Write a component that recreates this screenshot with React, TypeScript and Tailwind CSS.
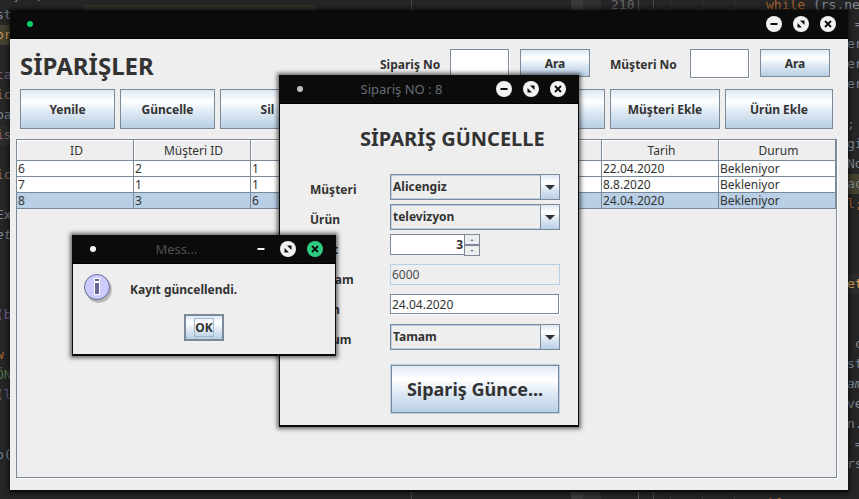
import React from "react";

const METAL =
  "bg-[linear-gradient(to_bottom,#dde8f3_0%,#ffffff_30%,#dde8f3_60%,#b8cfe5_100%)]";
const CODE =
  "absolute w-max font-['DejaVu_Sans_Mono',monospace] text-[13px] leading-5 text-[#7f8b98] whitespace-pre";

const leftCode: [string, string][] = [
  ["st", ""],
  ["or", "bg-[#45422f] text-[#c89b56]"],
  ["", ""],
  ["ta", "text-[#7d6589]"],
  ["ic", "text-[#8d706e]"],
  ["pa", ""],
  ["is", "bg-[#2d2d2d] text-[#8d706e]"],
  ["", ""],
  ["ic", "text-[#8d706e]"],
  ["", ""],
  ["Ex", ""],
  ["et", "italic"],
  ["", ""],
  ["", ""],
  ["", ""],
  ["(b", "text-[#6f608f]"],
  ["", ""],
  ["w", "text-[#b06a32]"],
  ["ÖN", "text-[#54734c]"],
  ["(l", "text-[#6f608f]"],
  ["", ""],
  ["", ""],
  ["p(", ""],
];

const rightCode: [string, string][] = [
  [" =", ""],
  ["er", ""],
  ["er", ""],
  ["er", ""],
  ["", ""],
  [";", ""],
  ["gi", ""],
  ["No", ""],
  ["ac", "bg-[#45422f]"],
  ["l;", "text-[#a0602f]"],
  ["", ""],
  ["", ""],
  ["", ""],
  ["et", "bg-[#2d2d2d] text-[#d9a55b]"],
  ["", ""],
  ["", ""],
  [" c", ""],
  ["st", ""],
  ["am", "italic"],
  ["ve", ""],
  ["n.", ""],
  [" =", ""],
  ["rs", ""],
];

function CodeColumn({ lines }: { lines: [string, string][] }) {
  return (
    <>
      {lines.map(([text, tone], i) => (
        <div key={i} className={`h-5 w-6 ${tone}`}>
          {text}
        </div>
      ))}
    </>
  );
}

function Editor() {
  return (
    <div aria-hidden="true" className="absolute inset-0 overflow-hidden bg-[#262626]">
      <div className="absolute top-[5px] left-[83px] h-5 w-[232px] bg-[#35342a]" />
      <div className="absolute inset-y-0 left-[411px] w-px bg-[#4a4a4a]" />
      <div className="absolute inset-y-0 left-[571px] w-3 bg-[#3a3b3c]" />
      <div className="absolute inset-y-0 left-[583px] w-[18px] bg-[#2f3133]" />
      <div className="absolute inset-y-0 left-[638px] w-px bg-[#5a5a5a]" />
      <div className="absolute inset-y-0 left-[653px] w-px bg-[#4a4a4a]" />
      <div className="absolute inset-y-0 left-[670px] border-l border-dotted border-[#3c3c3c]" />
      <div className="absolute inset-y-0 left-[702px] border-l border-dotted border-[#3c3c3c]" />
      <div className="absolute inset-y-0 left-[734px] border-l border-dotted border-[#3c3c3c]" />
      <div className={`${CODE} -top-[15px] left-3`}>ş );</div>
      <div className={`${CODE} -top-[5px] left-[611px]`}>
        <span className="text-[#666a6d]">210</span>
      </div>
      <div className={`${CODE} -top-[5px] left-[766px]`}>
        <span className="text-[#a8642f]">while</span> (rs.next
      </div>
      <div className={`${CODE} top-[494px] left-[766px]`}>
        <span className="text-[#a8642f]">if</span>
      </div>
      <div className={`${CODE} top-[5px] -left-1`}>
        <CodeColumn lines={leftCode} />
      </div>
      <div className={`${CODE} top-[14px] left-[847px]`}>
        <CodeColumn lines={rightCode} />
      </div>
    </div>
  );
}

function WindowButton({
  kind,
  look = "light",
}: {
  kind: "minimize" | "maximize" | "close";
  look?: "light" | "green" | "bare";
}) {
  const disc = look === "green" ? "#2ecc80" : "#f2f2f2";
  const ink = look === "bare" ? "#f2f2f2" : "#0b0b0b";
  return (
    <button type="button" aria-label={kind} className="size-4">
      <svg viewBox="0 0 16 16" className="size-4">
        {look !== "bare" && <circle cx="8" cy="8" r="8" fill={disc} />}
        {kind === "minimize" && <rect x="4.5" y="7" width="7" height="2" fill={ink} />}
        {kind === "maximize" && (
          <path d="M7 4.5h4.500v4.500zM4.500 7l4.500 4.500h-4.500z" fill={ink} />
        )}
        {kind === "close" && (
          <path d="M5 5l6 6M11 5l-6 6" stroke={ink} strokeWidth="1.800" />
        )}
      </svg>
    </button>
  );
}

function TitleBar({
  title,
  dot,
  message = false,
}: {
  title?: string;
  dot: string;
  message?: boolean;
}) {
  return (
    <header className="flex h-[29px] shrink-0 items-center border-b border-black bg-[#0b0b0b] pr-3 pl-[17px]">
      <span className={`size-[6px] rounded-full ${dot}`} />
      <span
        className={`flex-1 pl-1 text-center text-[13px] leading-5 ${message ? "text-[#505050]" : "text-[#676d77]"}`}
      >
        {title}
      </span>
      <div className="flex gap-[11px]">
        <WindowButton kind="minimize" look={message ? "bare" : "light"} />
        <WindowButton kind="maximize" />
        <WindowButton kind="close" look={message ? "green" : "light"} />
      </div>
    </header>
  );
}

function MetalButton({
  className,
  label,
  children,
}: {
  className: string;
  label?: string;
  children?: React.ReactNode;
}) {
  return (
    <button
      type="button"
      aria-label={label}
      className={`border border-[#7a8a99] pt-[2px] font-bold ${METAL} ${className}`}
    >
      {children}
    </button>
  );
}

const FIELD = "border border-[#7a8a99] bg-white shadow-[1px_1px_0_#ffffff]";

function SearchBox({ id, label, width }: { id: string; label: string; width: string }) {
  return (
    <div className="flex items-start">
      <label htmlFor={id} className={`leading-8 font-bold ${width}`}>
        {label}
      </label>
      <input id={id} className={`mr-[11px] h-[29px] w-[59px] px-[2px] ${FIELD}`} />
      <MetalButton className="h-7 w-[70px]">Ara</MetalButton>
    </div>
  );
}

const columns = ["ID", "Müşteri ID", "", "", "", "Tarih", "Durum"];
const orders = [
  ["6", "2", "1", "", "", "22.04.2020", "Bekleniyor"],
  ["7", "1", "1", "", "", "8.8.2020", "Bekleniyor"],
  ["8", "3", "6", "", "", "24.04.2020", "Bekleniyor"],
];

function OrdersTable() {
  return (
    <div className="mr-[11px] ml-[6px] flex-1 border border-[#7a8a99] shadow-[1px_1px_0_#ffffff]">
      <table className="w-full table-fixed border-separate border-spacing-0">
        <thead>
          <tr>
            {columns.map((name, i) => (
              <th
                key={i}
                className="h-[21px] border-r border-b border-[#7a8a99] p-0 pt-[2px] pl-[3px] text-[12px] leading-[18px] font-normal shadow-[inset_1px_1px_0_#ffffff]"
              >
                {name}
              </th>
            ))}
          </tr>
        </thead>
        <tbody>
          {orders.map((row) => (
            <tr key={row[0]} className={row[0] === "8" ? "bg-[#b8cfe5]" : "bg-white"}>
              {row.map((cell, i) => (
                <td
                  key={i}
                  className="h-4 border-r border-b border-[#7a8a99] p-0 pl-px leading-[15px]"
                >
                  {cell}
                </td>
              ))}
            </tr>
          ))}
        </tbody>
      </table>
    </div>
  );
}

function OrdersWindow() {
  return (
    <section className="relative flex flex-1 flex-col border-b-2 border-[#0b0b0b] bg-[#eeeeee] shadow-[0_0_6px_1px_rgba(0,0,0,0.7)]">
      <TitleBar dot="bg-[#00cc66]" />
      <div className="flex flex-1 flex-col gap-[10px] pt-[10px] pb-3">
        <div className="flex h-[30px] pr-[18px] pl-[10px]">
          <h1 className="mr-auto text-[24px] leading-[34px] font-bold">SİPARİŞLER</h1>
          <div className="flex gap-5">
            <SearchBox id="order-no" label="Sipariş No" width="w-[70px]" />
            <SearchBox id="customer-no" label="Müşteri No" width="w-20" />
          </div>
        </div>
        <div className="flex h-10 gap-[5px] pr-[15px] pl-[10px]">
          <MetalButton className="w-[95px]">Yenile</MetalButton>
          <MetalButton className="w-[95px]">Güncelle</MetalButton>
          <MetalButton className="w-[95px]">Sil</MetalButton>
          <MetalButton className="flex-1" label="Sipariş Ekle" />
          <MetalButton className="w-[110px]">Müşteri Ekle</MetalButton>
          <MetalButton className="w-[108px]">Ürün Ekle</MetalButton>
        </div>
        <OrdersTable />
      </div>
    </section>
  );
}

function FormRow({ id, label, children }: { id: string; label: string; children: React.ReactNode }) {
  return (
    <div className="flex h-[30px] items-start">
      <label htmlFor={id} className="w-20 leading-8 font-bold">
        {label}
      </label>
      {children}
    </div>
  );
}

function Combo({ id, value }: { id: string; value: string }) {
  return (
    <div className="relative flex h-[26px] flex-1 border border-[#7a8a99]">
      <select
        id={id}
        className="w-full appearance-none bg-[#eeeeee] pr-5 pl-[2px] font-bold shadow-[inset_0_0_0_1px_#b8cfe5] outline-none"
      >
        <option>{value}</option>
      </select>
      <span
        className={`pointer-events-none absolute inset-y-0 right-0 flex w-[19px] items-center justify-center border-l border-[#7a8a99] ${METAL}`}
      >
        <svg viewBox="0 0 10 5" className="mt-px h-[5px] w-[10px]">
          <path d="M0 0h10l-5 5z" fill="#333333" />
        </svg>
      </span>
    </div>
  );
}

function SpinButton({ up }: { up?: boolean }) {
  return (
    <button
      type="button"
      aria-label={up ? "Artır" : "Azalt"}
      className="flex h-[11px] w-4 items-center justify-center border border-[#7a8a99]"
    >
      <svg viewBox="0 0 4 2" className="h-[2px] w-1">
        <path d={up ? "M0 2h4l-2-2z" : "M0 0h4l-2 2z"} fill="#7a8a99" />
      </svg>
    </button>
  );
}

const SHADOW = "shadow-[0_0_4px_2px_rgba(0,0,0,0.55)]";

function UpdateDialog() {
  return (
    <section
      role="dialog"
      aria-label="Sipariş NO : 8"
      className={`absolute top-[75px] left-[279px] w-[300px] border-x border-b-2 border-[#0b0b0b] bg-[#eeeeee] ${SHADOW}`}
    >
      <TitleBar title="Sipariş NO : 8" dot="bg-[#c0c0c0]" />
      <div className="pr-[18px] pb-[11px] pl-[30px]">
        <h2 className="pt-5 pb-5 pl-[50px] text-[20px] leading-[30px] font-bold whitespace-nowrap">
          SİPARİŞ GÜNCELLE
        </h2>
        <FormRow id="customer" label="Müşteri">
          <Combo id="customer" value="Alicengiz" />
        </FormRow>
        <FormRow id="product" label="Ürün">
          <Combo id="product" value="televizyon" />
        </FormRow>
        <FormRow id="amount" label="Adet">
          <input
            id="amount"
            defaultValue="3"
            className="h-[21px] w-[74px] border-y border-l border-[#7a8a99] bg-white pr-px text-right font-bold"
          />
          <div className="flex flex-col">
            <SpinButton up />
            <SpinButton />
          </div>
        </FormRow>
        <FormRow id="total" label="Toplam">
          <input
            id="total"
            readOnly
            defaultValue="6000"
            className="h-[21px] w-0 flex-1 border border-[#b8cfe5] px-px text-[#4a4a4a]"
          />
        </FormRow>
        <FormRow id="date" label="Tarih">
          <input id="date" defaultValue="24.04.2020" className={`mr-px h-5 w-0 flex-1 px-px ${FIELD}`} />
        </FormRow>
        <FormRow id="status" label="Durum">
          <Combo id="status" value="Tamam" />
        </FormRow>
        <button
          type="button"
          className={`mt-[10px] ml-20 flex h-[50px] w-[170px] items-center justify-center border border-[#b8cfe5] text-[18px] font-bold whitespace-nowrap shadow-[inset_0_0_0_1px_#7a8a99] ${METAL}`}
        >
          Sipariş Günce...
        </button>
      </div>
    </section>
  );
}

function MessageDialog() {
  return (
    <section
      role="alertdialog"
      aria-label="Mess..."
      className={`absolute top-[235px] left-[72px] w-[264px] border-x border-b-2 border-[#0b0b0b] bg-[#eeeeee] ${SHADOW}`}
    >
      <TitleBar title="Mess..." dot="bg-[#f2f2f2]" message />
      <div className="flex flex-col items-center pt-[10px] pb-[13px]">
        <div className="flex w-full items-center gap-[15px] pl-[10px]">
          <svg viewBox="0 0 32 32" className="size-8">
            <circle cx="16" cy="16" r="13" fill="#777777" opacity="0.25" />
            <circle cx="15.500" cy="15.500" r="13" fill="#777777" opacity="0.3" />
            <circle cx="14" cy="13" r="12.500" fill="#ccccff" stroke="#666699" />
            <path d="M11 4h6v4h-6zM11 8h6v13h-6z" fill="#ffffff" />
            <path d="M12 5h4v2h-4zM12 9h4v11h-4z" fill="#666699" />
          </svg>
          <p className="leading-[30px] font-bold">Kayıt güncellendi.</p>
        </div>
        <button
          type="button"
          className={`mt-2 flex h-[27px] w-10 items-center justify-center border-2 border-[#7a8a99] font-bold ${METAL}`}
        >
          <span className="border border-[#a3b8cc] leading-[17px]">OK</span>
        </button>
      </div>
    </section>
  );
}

export default function App() {
  return (
    <main className="relative flex min-h-screen overflow-hidden pt-[10px] pr-[11px] pb-[7px] pl-[10px] font-['Noto_Sans','Open_Sans',sans-serif] text-[12px] text-[#333333]">
      <Editor />
      <OrdersWindow />
      <UpdateDialog />
      <MessageDialog />
    </main>
  );
}
